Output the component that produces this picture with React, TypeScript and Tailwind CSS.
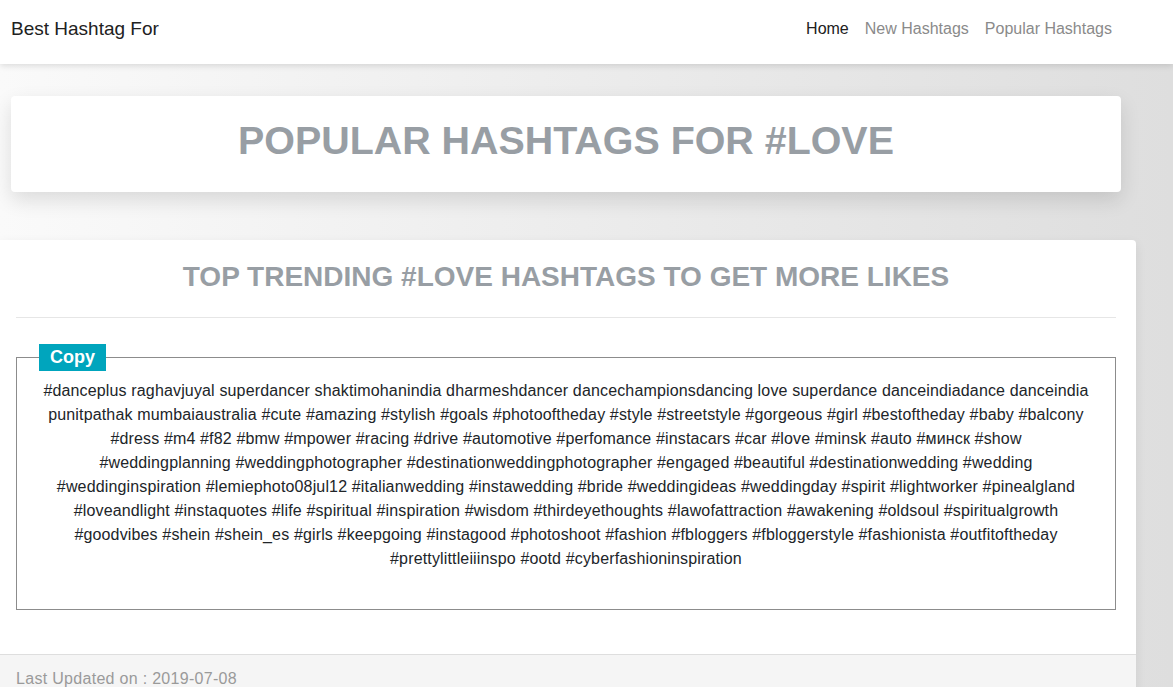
const lines = [
  '#danceplus raghavjuyal superdancer shaktimohanindia dharmeshdancer dancechampionsdancing love superdance danceindiadance danceindia',
  'punitpathak mumbaiaustralia #cute #amazing #stylish #goals #photooftheday #style #streetstyle #gorgeous #girl #bestoftheday #baby #balcony',
  '#dress #m4 #f82 #bmw #mpower #racing #drive #automotive #perfomance #instacars #car #love #minsk #auto #минск #show',
  '#weddingplanning #weddingphotographer #destinationweddingphotographer #engaged #beautiful #destinationwedding #wedding',
  '#weddinginspiration #lemiephoto08jul12 #italianwedding #instawedding #bride #weddingideas #weddingday #spirit #lightworker #pinealgland',
  '#loveandlight #instaquotes #life #spiritual #inspiration #wisdom #thirdeyethoughts #lawofattraction #awakening #oldsoul #spiritualgrowth',
  '#goodvibes #shein #shein_es #girls #keepgoing #instagood #photoshoot #fashion #fbloggers #fbloggerstyle #fashionista #outfitoftheday',
  '#prettylittleiiinspo #ootd #cyberfashioninspiration',
];

export default function App() {
  return (
    <div className="min-h-screen bg-gradient-to-r from-[#fafafa] to-[#dedede] font-['Liberation_Sans',Arial,sans-serif] text-[#212529]">
      {/* Top navbar */}
      <nav className="h-16 bg-white shadow-[0_2px_6px_rgba(0,0,0,0.12)] flex items-center justify-between pl-[11px] pr-[61px] pb-[6px] relative z-10">
        <a className="text-[19px] text-[#212121]">Best Hashtag For</a>
        <ul className="flex items-center gap-4 text-[16px]">
          <li className="text-[#212121]">Home</li>
          <li className="text-[#8a8a8a]">New Hashtags</li>
          <li className="text-[#8a8a8a]">Popular Hashtags</li>
        </ul>
      </nav>

      {/* Page title card */}
      <div className="pt-8 pl-[11px]">
        <div className="w-[1110px] h-24 bg-white rounded shadow-[0_8px_20px_rgba(0,0,0,0.12)] flex items-center justify-center pb-[6px]">
          <h1 className="text-[39.4px] font-bold text-[#989ea4] leading-none">POPULAR HASHTAGS FOR #LOVE</h1>
        </div>
      </div>

      {/* Hashtag card */}
      <div className="mt-12 w-[1136px] bg-white rounded-tr shadow-[0_4px_12px_rgba(0,0,0,0.08)]">
        <div className="pl-4 pr-5 pt-5">
          <h2 className="text-[28px] font-bold text-[#989ea4] text-center leading-[34px]">
            TOP TRENDING #LOVE HASHTAGS TO GET MORE LIKES
          </h2>
          <hr className="mt-[23px] border-t border-[#e6e6e6]" />
          <fieldset className="mt-[26px] border border-[#8c8c8c] px-4 pb-[38px]">
            <legend className="ml-[6px] bg-[#00a5bd] text-white font-bold text-[18px] leading-[27px] px-[11px]">
              Copy
            </legend>
            <div className="mt-2 text-[16px] leading-6 tracking-[0.15px] text-center">
              {lines.map((l) => (
                <div key={l} className="whitespace-nowrap">{l}</div>
              ))}
            </div>
          </fieldset>
        </div>
        <div className="mt-[44px] border-t border-[#dedede] bg-[#f5f5f5] h-[60px] px-4 pt-3">
          <span className="text-[16px] tracking-[0.3px] text-[#9a9a9a]">Last Updated on : 2019-07-08</span>
        </div>
      </div>
    </div>
  );
}
